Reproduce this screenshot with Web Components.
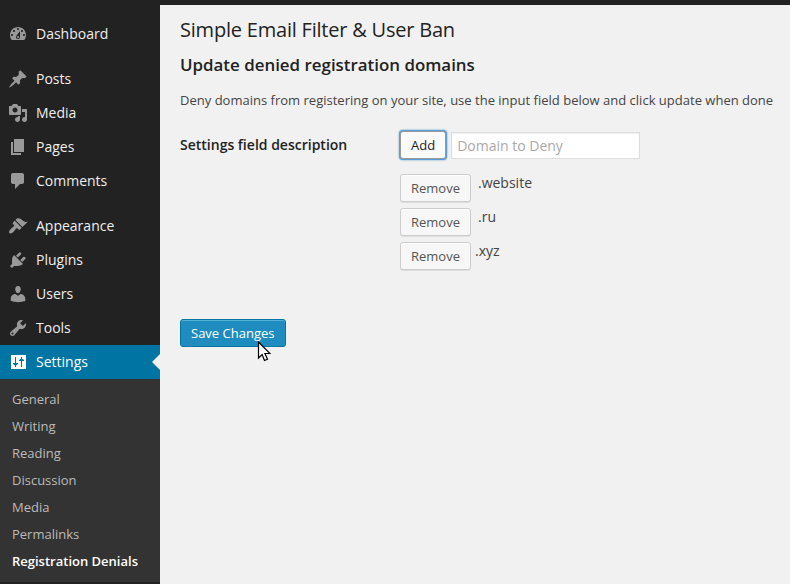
<!DOCTYPE html>
<html lang="en">
<head>
<meta charset="utf-8">
<title>Simple Email Filter &amp; User Ban</title>
<style>
html,body{margin:0;height:584px;overflow:hidden;background:#f1f1f1}
body{font:13px/18px "Open Sans",sans-serif;color:#444}
</style>
</head>
<body>
<admin-shell>
  <admin-menu slot="menu">
    <menu-item icon="dashboard">Dashboard</menu-item>
    <menu-item icon="posts" spaced>Posts</menu-item>
    <menu-item icon="media">Media</menu-item>
    <menu-item icon="pages">Pages</menu-item>
    <menu-item icon="comments">Comments</menu-item>
    <menu-item icon="appearance" spaced>Appearance</menu-item>
    <menu-item icon="plugins">Plugins</menu-item>
    <menu-item icon="users">Users</menu-item>
    <menu-item icon="tools">Tools</menu-item>
    <menu-item icon="settings" current>Settings</menu-item>
    <sub-menu>
      <sub-item>General</sub-item>
      <sub-item>Writing</sub-item>
      <sub-item>Reading</sub-item>
      <sub-item>Discussion</sub-item>
      <sub-item>Media</sub-item>
      <sub-item>Permalinks</sub-item>
      <sub-item current>Registration Denials</sub-item>
    </sub-menu>
  </admin-menu>
  <settings-page></settings-page>
</admin-shell>
<mouse-pointer></mouse-pointer>
<script>
const ICONS = {
  dashboard: "M3.76 16h12.48c1.1-1.37 1.76-3.11 1.76-5 0-4.42-3.58-8-8-8s-8 3.58-8 8c0 1.89.66 3.63 1.76 5zM10 4c.55 0 1 .45 1 1s-.45 1-1 1-1-.45-1-1 .45-1 1-1zM6 6c.55 0 1 .45 1 1s-.45 1-1 1-1-.45-1-1 .45-1 1-1zm8 0c.55 0 1 .45 1 1s-.45 1-1 1-1-.45-1-1 .45-1 1-1zm-5.37 5.55L12 7v6c0 1.1-.9 2-2 2s-2-.9-2-2c0-.57.24-1.08.63-1.45zM4 10c.55 0 1 .45 1 1s-.45 1-1 1-1-.45-1-1 .45-1 1-1zm12 0c.55 0 1 .45 1 1s-.45 1-1 1-1-.45-1-1 .45-1 1-1zm-5 3c0-.55-.45-1-1-1s-1 .45-1 1 .45 1 1 1 1-.45 1-1z",
  posts: "M10.44 3.02l1.82-1.82 6.36 6.35-1.83 1.82c-1.05-.68-2.48-.57-3.41.36l-.75.75c-.92.93-1.04 2.35-.35 3.41l-1.83 1.82-2.41-2.41-2.8 2.79c-.42.42-3.38 2.71-3.8 2.29s1.86-3.39 2.28-3.81l2.79-2.79L4.1 9.36l1.83-1.82c1.05.69 2.48.57 3.4-.36l.75-.75c.93-.92 1.05-2.35.36-3.41z",
  media: "M13 11V4c0-.55-.45-1-1-1h-1.67L9 1H5L3.67 3H2c-.55 0-1 .45-1 1v7c0 .55.45 1 1 1h10c.55 0 1-.45 1-1zM7 4.5c1.38 0 2.5 1.12 2.5 2.5S8.38 9.5 7 9.5 4.5 8.38 4.5 7 5.62 4.5 7 4.5zM14 6h5v10.5c0 1.38-1.12 2.5-2.5 2.5S14 17.88 14 16.5s1.12-2.5 2.5-2.5c.17 0 .34.02.5.05V9h-3V6zm-4 8.05V13h2v3.5c0 1.38-1.12 2.5-2.5 2.5S7 17.88 7 16.5 8.12 14 9.5 14c.17 0 .34.02.5.05z",
  pages: "M6 15V2h10v13H6zm-1 1h8v2H3V5h2v11z",
  comments: "M5 2h9c1.1 0 2 .9 2 2v7c0 1.1-.9 2-2 2h-2l-5 5v-5H5c-1.1 0-2-.9-2-2V4c0-1.1.9-2 2-2z",
  appearance: "M14.48 11.06L7.41 3.99l1.5-1.5c.5-.56 2.3-.47 3.51.32 1.21.8 1.43 1.28 2.91 2.1 1.18.64 2.45 1.26 4.45.85zm-.71.71L6.7 4.7 4.93 6.47c-.39.39-.39 1.02 0 1.41l1.06 1.06c.39.39.39 1.03 0 1.42-.6.6-1.43 1.11-2.21 1.69-.35.26-.7.53-1.01.84C1.43 14.23.4 16.08 1.4 17.07c.99 1 2.84-.03 4.18-1.36.31-.31.58-.66.85-1.02.57-.78 1.08-1.61 1.69-2.21.39-.39 1.02-.39 1.41 0l1.06 1.06c.39.39 1.02.39 1.41 0z",
  plugins: "M13.11 4.36L9.87 7.6 8 5.73l3.24-3.24c.35-.34 1.05-.2 1.56.32.52.51.66 1.21.31 1.55zm-8 1.77l.91-1.12 9.01 9.01-1.19.84c-.71.71-2.63 1.16-3.82 1.16H6.14L4.9 17.26c-.59.59-1.54.59-2.12 0-.59-.58-.59-1.53 0-2.12l1.24-1.24v-3.88c0-1.13.4-3.19 1.09-3.89zm7.26 3.97l3.24-3.24c.34-.35 1.04-.21 1.55.31.52.51.66 1.21.31 1.55l-3.24 3.25z",
  users: "M10 9.25c-2.27 0-2.73-3.44-2.73-3.44C7 4.02 7.82 2 9.97 2c2.16 0 2.98 2.02 2.71 3.81 0 0-.41 3.44-2.68 3.44zm0 2.57L12.72 10c2.39 0 4.52 2.33 4.52 4.53v2.49s-3.65 1.13-7.24 1.13c-3.65 0-7.24-1.13-7.24-1.13v-2.49c0-2.25 1.94-4.48 4.47-4.48z",
  tools: "M16.68 9.77c-1.34 1.34-3.3 1.67-4.95.99l-5.41 6.52c-.99.99-2.59.99-3.58 0s-.99-2.59 0-3.57l6.52-5.42c-.68-1.65-.35-3.61.99-4.95 1.28-1.28 3.12-1.62 4.72-1.06l-2.89 2.89 2.82 2.82 2.86-2.87c.53 1.58.18 3.39-1.08 4.65zM3.81 16.21c.4.39 1.04.39 1.43 0 .4-.4.4-1.04 0-1.43-.39-.4-1.03-.4-1.43 0-.39.39-.39 1.03 0 1.43z",
  settings: "M3 3h15v14H3zM7 5v6H5v1l2 1.500V15h1v-1.500L10 12v-1H8V5zM13 15V9h-2V8l2-1.500V5h1v1.500L16 8v1h-2v6z"
};
function define(name, html) {
  customElements.define(name, class extends HTMLElement {
    connectedCallback() {
      if (this.shadowRoot) return;
      const markup = typeof html === "function" ? html(this) : html;
      this.attachShadow({ mode: "open" }).innerHTML = markup;
    }
  });
}
define("admin-shell", `<style>
  :host{display:grid;grid-template-columns:160px 1fr;grid-template-rows:5px 579px;height:584px}
  .bar{grid-column:1/3;background:#222}
</style><div class="bar"></div><slot name="menu"></slot><slot></slot>`);
define("admin-menu", `<style>
  :host{display:flex;flex-direction:column;background:#222;padding-top:12px;box-sizing:border-box}
</style><slot></slot>`);
define("menu-item", el => `<style>
  :host{display:flex;align-items:center;height:34px;padding-left:8px;gap:8px;font-size:14px;line-height:18px;color:#eee;position:relative;box-sizing:border-box;flex:none}
  :host([spaced]){margin-top:11px}
  :host([current]){background:#0074a2;color:#fff}
  svg{width:20px;height:20px;fill:#999}
  :host([current]) svg{fill:#fff}
  :host([current])::after{content:"";position:absolute;right:0;top:9px;border:8px solid transparent;border-left:0;border-right-color:#f1f1f1}
</style><svg viewBox="0 0 20 20"><path fill-rule="evenodd" d="${ICONS[el.getAttribute("icon")]}"/></svg><span><slot></slot></span>`);
define("sub-menu", `<style>
  :host{display:block;background:#333;padding:7px 0}
</style><slot></slot>`);
define("sub-item", `<style>
  :host{display:block;padding:5px 12px;font-size:13px;line-height:17px;color:#bbb;white-space:nowrap}
  :host([current]){color:#fff;font-weight:600}
</style><slot></slot>`);
define("wp-button", `<style>
  :host{display:inline-block;flex:none}
  button{display:block;margin:0;height:28px;padding:0 10px 1px;font:13px/26px "Open Sans",sans-serif;color:#555;background:#f7f7f7;border:1px solid #ccc;border-radius:3px;box-sizing:border-box;white-space:nowrap;box-shadow:inset 0 1px 0 #fff,0 1px 0 rgba(0,0,0,.08)}
  :host([focused]) button{background:#fafafa;border-color:#999;color:#222;box-shadow:0 0 0 1px #5b9dd9,0 0 2px 1px rgba(30,140,190,.8)}
  :host([primary]) button{width:106px;text-align:left;background:#1e8cbe;border-color:#0074a2;color:#fff;box-shadow:inset 0 1px 0 rgba(120,200,230,.6)}
</style><button type="button"><slot></slot></button>`);
define("domain-row", `<style>
  :host{display:flex;height:34px;gap:var(--gap,7px)}
  span{font-size:14px;line-height:20px;margin-top:-1px}
</style><wp-button>Remove</wp-button><span><slot></slot></span>`);
define("settings-page", `<style>
  :host{display:block;padding:12px 0 0 20px;white-space:nowrap}
  h1{margin:0;font-size:20px;font-weight:400;line-height:25px;letter-spacing:-.21px;color:#222}
  h2{margin:12px 0 0;font-size:16.9px;font-weight:600;line-height:22px;color:#222}
  p{margin:15px 0 0;line-height:18px;letter-spacing:.008px}
  .form{display:grid;grid-template-columns:220px 1fr;margin-top:22px}
  .label{font-size:14px;font-weight:600;line-height:18px;color:#222;padding-top:5px}
  .add{display:flex;gap:5px;align-items:center;height:28px}
  input{width:189px;height:27px;margin:0;padding:3px 5px;border:1px solid #ddd;background:#fff;font:14px/19px "Open Sans",sans-serif;box-sizing:border-box;box-shadow:inset 0 1px 2px rgba(0,0,0,.07);border-radius:0}
  input::placeholder{color:#a9a9a9;opacity:1}
  .rows{margin-top:15px}
  .save{margin-top:43px}
</style>
<h1>Simple Email Filter &amp; User Ban</h1>
<h2>Update denied registration domains</h2>
<p>Deny domains from registering on your site, use the input field below and click update when done</p>
<div class="form"><div class="label">Settings field description</div>
<div><div class="add"><wp-button focused>Add</wp-button><input placeholder="Domain to Deny"></div>
<div class="rows"><domain-row>.website</domain-row><domain-row>.ru</domain-row><domain-row style="--gap:4px">.xyz</domain-row></div></div></div>
<div class="save"><wp-button primary>Save Changes</wp-button></div>`);
define("mouse-pointer", `<style>
  :host{position:absolute;left:257px;top:341px;width:14px;height:21px}
  svg{display:block}
</style><svg width="14" height="21" viewBox="0 0 14 21"><path d="M1.5 1v16l3.6-3.5 2.4 6 3-1.3-2.6-5.7H13z" fill="#fff" stroke="#000" stroke-width="1.2"/></svg>`);
</script>
</body>
</html>
